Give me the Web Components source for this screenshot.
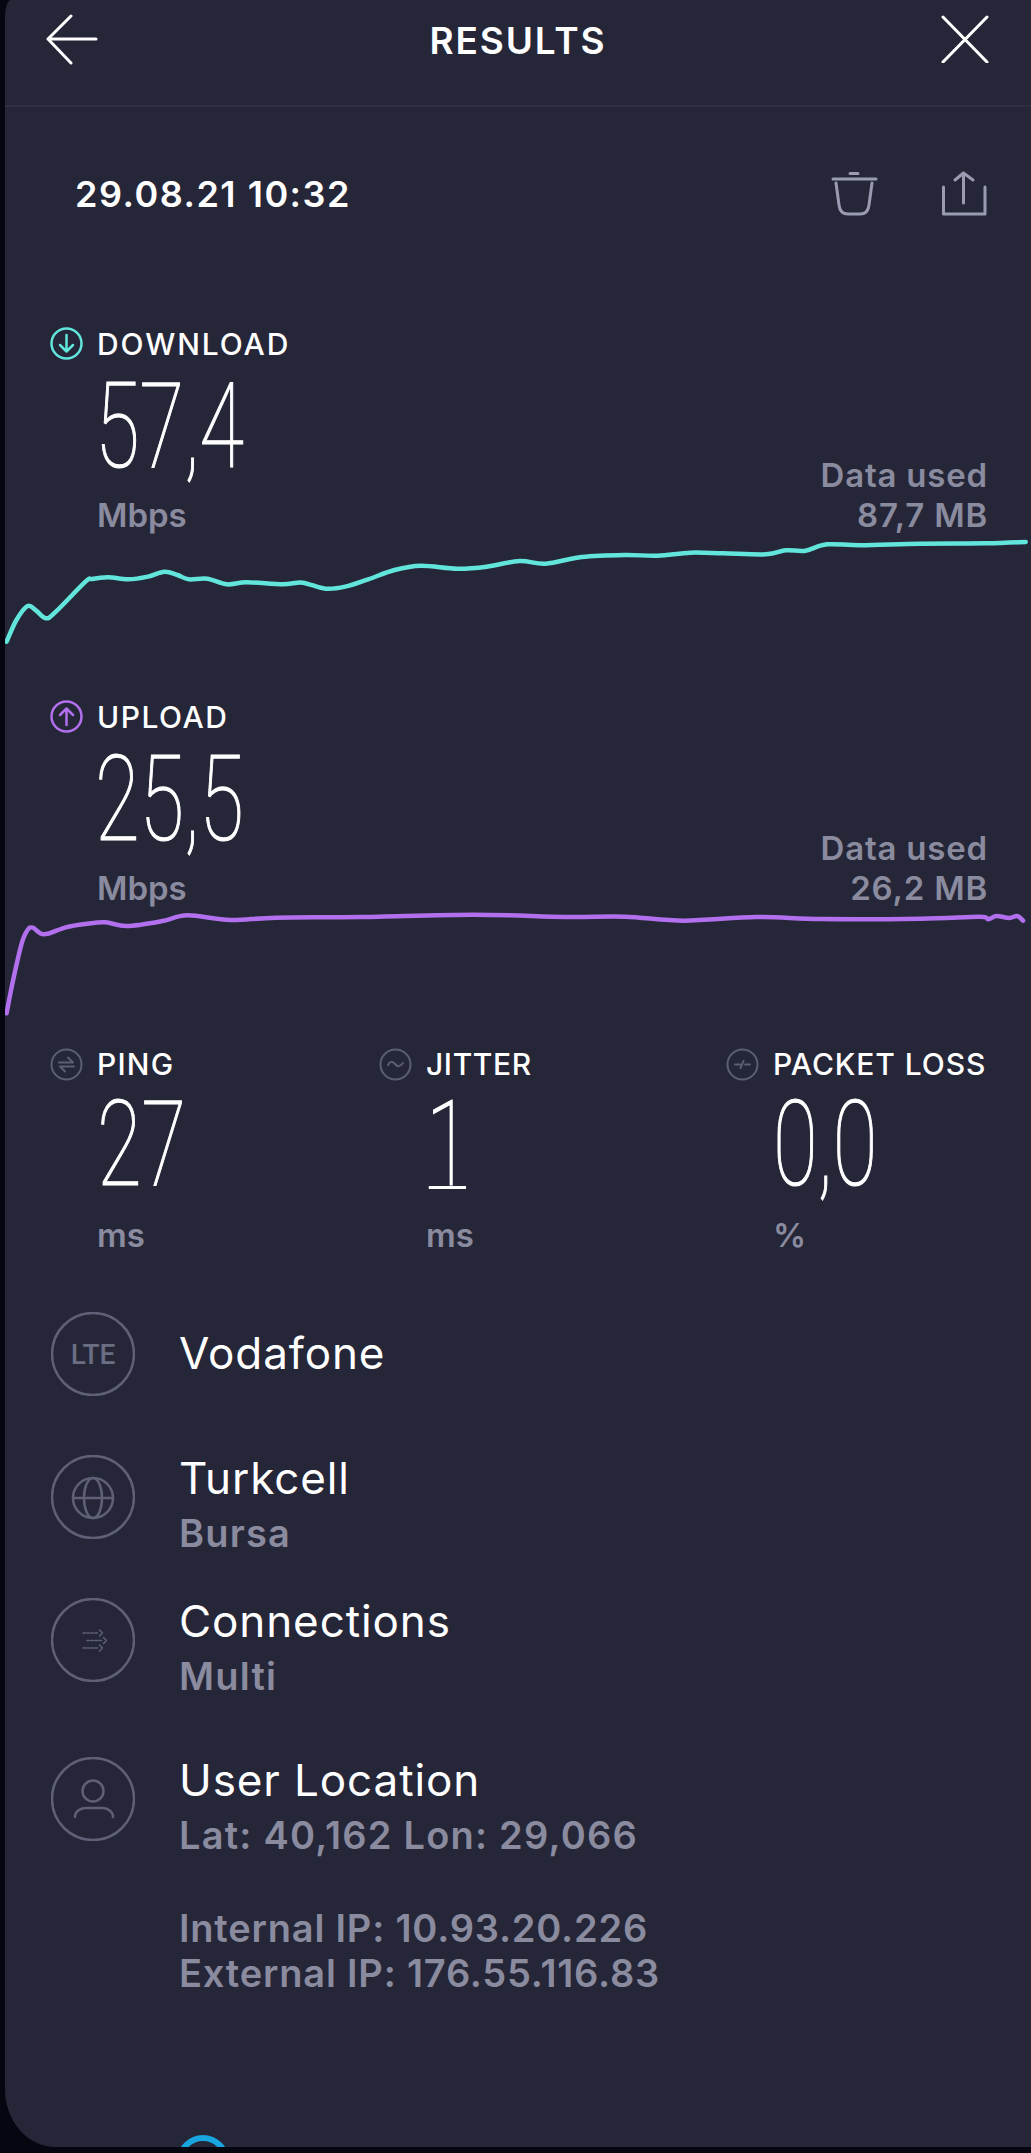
<!DOCTYPE html>
<html>
<head>
<meta charset="utf-8">
<title>Results</title>
<style>
html, body { margin: 0; background: #05060f; }
body { font-family: Inter, "Liberation Sans", sans-serif; color: #fff; }
</style>
</head>
<body>
<sp-app>
  <sp-header>RESULTS</sp-header>
  <sp-date>29.08.21 10:32</sp-date>

  <sp-result kind="download" style="--ls:1.9px" color="#62e6dc" label="DOWNLOAD" value="57,4" data="87,7 MB"
    points="10,1025 25,960 42,918 55,932 70,955 85,935 130,845 140,837 165,832 195,838 225,830 250,815 270,825 287,838 315,836 345,853 375,847 430,853 460,848 495,866 525,860 560,838 600,810 640,797 695,806 740,800 790,783 830,791 885,771 950,765 1000,767 1050,758 1100,760 1165,763 1195,751 1225,752 1258,733 1310,736 1400,731 1500,730 1560,726"></sp-result>
  <sp-result kind="upload" style="--ls:1.5px" color="#b270ee" label="UPLOAD" value="25,5" data="26,2 MB"
    points="10,1000 20,900 33,790 42,750 50,743 67,763 100,742 130,732 160,727 193,738 245,724 285,706 350,720 420,713 550,711 720,704 860,711 950,710 1040,722 1150,711 1250,717 1400,716 1490,710 1503,718 1515,708 1535,714 1547,708 1556,722"></sp-result>

  <sp-metrics>
    <sp-metric icon="ping" style="--ls:1.2px" label="PING" value="27" unit="ms"></sp-metric>
    <sp-metric icon="jitter" style="--ls:.6px" label="JITTER" value="1" unit="ms"></sp-metric>
    <sp-metric icon="loss" style="--ls:.9px" label="PACKET LOSS" value="0,0" unit="%"></sp-metric>
  </sp-metrics>

  <sp-info icon="lte" style="--top:53px" single>Vodafone</sp-info>
  <sp-info icon="globe" style="--top:59px">Turkcell<span slot="sub">Bursa</span></sp-info>
  <sp-info icon="conn" style="--top:38px">Connections<span slot="sub">Multi</span></sp-info>
  <sp-info icon="user" style="--top:54px">User Location
    <span slot="sub">Lat: 40,162 Lon: 29,066</span>
    <span slot="note">Internal IP: 10.93.20.226</span>
    <span slot="note">External IP: 176.55.116.83</span>
  </sp-info>
</sp-app>

<script>
const ICONS = {
  ping: '<path d="M9 14.500h14l-5-5M24 18.500H10l5 5"/>',
  jitter: '<path d="M9 17c2-4 4.500-4 7 -1s5 3 8-1"/>',
  loss: '<path d="M9 16.500h5M19 16.500h5M14.500 20l3-7"/>',
  lte: '<text x="42" y="51.500" text-anchor="middle" font-family="Roboto, sans-serif" font-weight="500" font-size="28" fill="#6b6d83" stroke="none">LTE</text>',
  globe: '<circle cx="42" cy="43" r="20"/><ellipse cx="42" cy="43" rx="9" ry="20"/><path d="M22 43h40"/>',
  conn: '<path d="M32 35h16M36 42.500h16M32 50h16" stroke-dasharray="2.500 1.500" stroke-width="1.500"/><path d="M48.500 32l3 3-3 3M52.500 39.500l3 3-3 3M48.500 47l3 3-3 3" stroke-width="1.500"/>',
  user: '<circle cx="42" cy="34" r="10.500"/><path d="M24 60c0-6 6-9 11-9h16c5 0 11 3 11 9"/>'
};

// catmull-rom through the traced points, the chart is a soft curve not a polyline
function smoothPath(str) {
  const p = str.trim().split(/\s+/).map(s => s.split(',').map(Number));
  let d = `M${p[0][0]} ${p[0][1]}`;
  for (let i = 0; i < p.length - 1; i++) {
    const a = p[Math.max(i - 1, 0)], b = p[i], c = p[i + 1], e = p[Math.min(i + 2, p.length - 1)];
    d += `C${b[0] + (c[0] - a[0]) / 6} ${b[1] + (c[1] - a[1]) / 6} ${c[0] - (e[0] - b[0]) / 6} ${c[1] - (e[1] - b[1]) / 6} ${c[0]} ${c[1]}`;
  }
  return d;
}

class SpApp extends HTMLElement {
  constructor() {
    super();
    this.attachShadow({mode: 'open'}).innerHTML = `
<style>
:host { display: block; padding: 0 0 6px 5px; height: 2147px; }
.panel {
  display: flex; flex-direction: column;
  height: 2147px; overflow: hidden;
  background: #252638;
  border-radius: 6px 0 0 50px / 16px 0 0 58px;
}
::slotted(*) { flex: none; }
.next { flex: none; display: block; margin: 139px 0 0 172px; }
</style>
<div class="panel">
  <slot></slot>
  <svg class="next" width="52" height="52" viewBox="0 0 52 52" fill="none"><circle cx="26" cy="26" r="23" stroke="#19a5df" stroke-width="6"/></svg>
</div>`;
  }
}

class SpHeader extends HTMLElement {
  constructor() {
    super();
    this.attachShadow({mode: 'open'}).innerHTML = `
<style>
:host {
  display: grid; grid-template-columns: 1fr auto 1fr;
  height: 105px; border-bottom: 2px solid #2e2f43;
  padding: 0 41px;
  font: 600 37px/82px Inter, sans-serif; letter-spacing: 1.9px; color: #fff;
}
svg { display: block; margin-top: 13px; fill: none; stroke: #fff; stroke-width: 3; stroke-linecap: round; stroke-linejoin: round; }
.close { justify-self: end; }
</style>
<svg width="52" height="52" viewBox="0 0 52 52"><path d="M25 3 2 26 25 50M2 26H50"/></svg>
<div><slot></slot></div>
<svg class="close" width="50" height="50" viewBox="0 0 50 50"><path d="M3 4 47 49M47 4 3 49"/></svg>`;
  }
}

class SpDate extends HTMLElement {
  constructor() {
    super();
    this.attachShadow({mode: 'open'}).innerHTML = `
<style>
:host {
  display: flex; align-items: center; justify-content: space-between;
  height: 219px; padding: 0 43px 0 70px;
  font: 600 36px/1 Inter, sans-serif; letter-spacing: 1.5px; color: #fff;
}
.icons { display: flex; gap: 61px; margin-top: -46px; }
.text { margin-top: -46px; }
svg { display: block; fill: none; stroke: #9a9bb1; stroke-width: 3; stroke-linecap: round; stroke-linejoin: round; }
</style>
<div class="text"><slot></slot></div>
<div class="icons">
  <svg width="49" height="48" viewBox="0 0 49 48"><path d="M3 9h43M20 3.500h8M6 13l3 22q1 9 9 9h12q8 0 9-9l3-22"/></svg>
  <svg width="48" height="48" viewBox="0 0 48 48"><path d="M3.500 17V44H45V17M23.500 33V3M15 10l8.500-7 9.500 7"/></svg>
</div>`;
  }
}

// small circled icon with a caps label, used on results and metrics
const labelCss = `
.label { display: flex; align-items: center; gap: 14px; height: 34px; font: 500 30px/34px Inter, sans-serif; letter-spacing: var(--ls, 1.2px); color: #fff; white-space: nowrap; }
.label svg { flex: none; fill: none; stroke-width: 2.500; stroke-linecap: round; stroke-linejoin: round; }
.value {
  display: block; position: relative; height: 135px; margin-left: 45px;
  font: 100 118px/135px Roboto, sans-serif; color: #fff;
  -webkit-text-stroke: 1.2px #fff;
  transform: scaleX(.69); transform-origin: 0 0; white-space: nowrap;
}
.unit { margin-left: 47px; font: 600 33px/40px Inter, sans-serif; color: #8a8b9f; }
`;

class SpResult extends HTMLElement {
  connectedCallback() {
    const c = this.getAttribute('color');
    const up = this.getAttribute('kind') == 'upload';
    const arrow = up ? 'M16.500 25V9M10 15l6.500-6.500L23 15' : 'M16.500 8v16M10 18l6.500 6.500L23 18';
    // chart was traced from a zoomed crop, so its viewBox keeps those units
    const box = up ? '0 690 1568 324' : '0 711 1568 324';
    this.attachShadow({mode: 'open'}).innerHTML = `
<style>
:host { display: block; margin-bottom: ${up ? 29 : 54}px; }
${labelCss}
.label span { margin-top: 2px; }
.top { display: flex; align-items: flex-end; justify-content: space-between; padding: 0 43px 0 45px; }
.data { text-align: right; font: 600 33px/40px Inter, sans-serif; letter-spacing: .8px; color: #8a8b9f; }
svg.chart { display: block; margin: 2px 0 0 -5px; width: 1031px; height: 108px; fill: none; overflow: visible; }
.line { stroke: ${c}; stroke-width: 4.500; vector-effect: non-scaling-stroke; stroke-linejoin: round; stroke-linecap: round; }
</style>
<div class="top">
  <div>
    <div class="label">
      <svg width="33" height="33" viewBox="0 0 33 33" style="stroke:${c}"><circle cx="16.500" cy="16.500" r="15"/><path d="${arrow}"/></svg>
      <span>${this.getAttribute('label')}</span>
    </div>
    <div class="value">${this.getAttribute('value')}</div>
    <div class="unit">Mbps</div>
  </div>
  <div class="data">Data used<br>${this.getAttribute('data')}</div>
</div>
<svg class="chart" viewBox="${box}" preserveAspectRatio="none"><path class="line" d="${smoothPath(this.getAttribute('points'))}"/></svg>`;
  }
}

class SpMetrics extends HTMLElement {
  constructor() {
    super();
    this.attachShadow({mode: 'open'}).innerHTML = `
<style>
:host { display: grid; grid-template-columns: 329px 347px 1fr; padding-left: 45px; height: 212px; }
</style>
<slot></slot>`;
  }
}

class SpMetric extends HTMLElement {
  connectedCallback() {
    const value = this.getAttribute('value');
    this.attachShadow({mode: 'open'}).innerHTML = `
<style>
:host { display: block; }
${labelCss}
.value { height: 134px; line-height: 128px; margin-left: 47px; }
.label svg { stroke-width: 2; }
/* the 1 in the reference has a foot, Roboto's does not */
.foot::after { content: ""; position: absolute; left: 4px; top: 104.500px; width: 54px; height: 3.500px; background: #fff; }
</style>
<div class="label">
  <svg width="33" height="33" viewBox="0 0 33 33" stroke="#5c5e74"><circle cx="16.500" cy="16.500" r="15"/>${ICONS[this.getAttribute('icon')]}</svg>
  ${this.getAttribute('label')}
</div>
<div class="value ${value == '1' ? 'foot' : ''}">${value}</div>
<div class="unit">${this.getAttribute('unit')}</div>`;
  }
}

class SpInfo extends HTMLElement {
  connectedCallback() {
    const single = this.hasAttribute('single');
    const hasNotes = this.querySelector('[slot="note"]');
    this.attachShadow({mode: 'open'}).innerHTML = `
<style>
:host { display: flex; gap: 44px; padding-left: 46px; margin-top: var(--top, 0); align-items: ${single ? 'center' : 'flex-start'}; }
svg { flex: none; display: block; fill: none; stroke: #5f6075; stroke-width: 2.500; stroke-linecap: round; stroke-linejoin: round; }
.text { margin-top: ${single ? '-2px' : '-5px'}; }
.title { font: 400 44px/56px Inter, sans-serif; letter-spacing: .9px; color: #fff; }
.sub { font: 600 38px/54px Inter, sans-serif; letter-spacing: 1.2px; color: #8a8b9f; }
.notes { margin-top: 44px; font: 600 38px/45px Inter, sans-serif; letter-spacing: .8px; color: #8a8b9f; }
::slotted([slot="note"]) { display: block; }
</style>
<svg width="84" height="84" viewBox="0 0 84 84"><circle cx="42" cy="42" r="41"/>${ICONS[this.getAttribute('icon')]}</svg>
<div class="text">
  <div class="title"><slot></slot></div>
  ${single ? '' : '<div class="sub"><slot name="sub"></slot></div>'}
  ${hasNotes ? '<div class="notes"><slot name="note"></slot></div>' : ''}
</div>`;
  }
}

customElements.define('sp-app', SpApp);
customElements.define('sp-header', SpHeader);
customElements.define('sp-date', SpDate);
customElements.define('sp-result', SpResult);
customElements.define('sp-metrics', SpMetrics);
customElements.define('sp-metric', SpMetric);
customElements.define('sp-info', SpInfo);
</script>
</body>
</html>
